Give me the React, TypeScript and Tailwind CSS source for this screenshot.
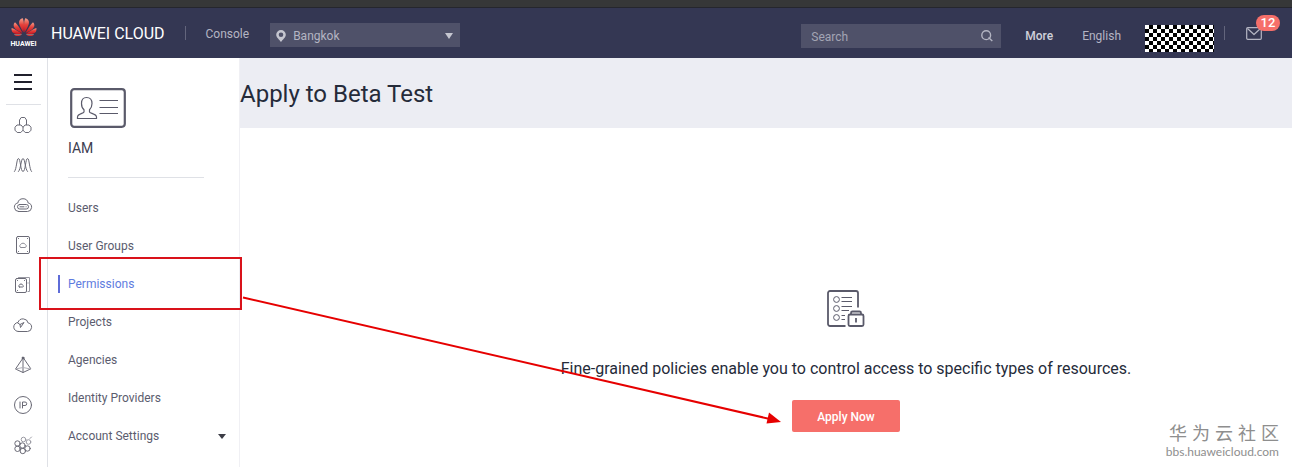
import type { ReactNode } from "react";

const menu = [
  "Users",
  "User Groups",
  "Permissions",
  "Projects",
  "Agencies",
  "Identity Providers",
];

function RailIcon({ children }: { children: ReactNode }) {
  return (
    <svg
      viewBox="0 0 20 20"
      className="w-5 h-5"
      fill="none"
      stroke="#6a6a76"
      strokeWidth="1"
      strokeLinecap="round"
      strokeLinejoin="round"
      aria-hidden="true"
    >
      {children}
    </svg>
  );
}

const services = [
  {
    label: "Elastic Cloud Server",
    icon: (
      <>
        <path d="M6.500 9.700V5L8.200 2.500H11.800L13.500 5V9.700" />
        <path d="M10 12.300L8 10H4L2 12.200V15.200L4.200 17.500H7.800L10 15.200L12.200 17.500H15.800L18 15.200V12.200L16 10H12L10 12.300V15.200" />
      </>
    ),
  },
  {
    label: "Auto Scaling",
    icon: (
      <>
        <path d="M1.500 16.500C3.800 14 3.500 3.500 5.500 3.500S7.500 16.500 10 16.500S12.500 3.500 14.500 3.500S16.200 14 18.500 16.500" />
        <path d="M5.500 16.500C8 14 8 3.500 10 3.500S12 14 14.500 16.500" />
      </>
    ),
  },
  {
    label: "Bare Metal Server",
    icon: (
      <>
        <path d="M5.500 16.500H14.500A4.300 4.300 0 0 0 15.200 8A5.300 5.300 0 0 0 4.800 8A4.300 4.300 0 0 0 5.500 16.500Z" />
        <rect x="4.500" y="9.500" width="11" height="4.500" rx="2.200" />
        <path d="M7 11.800H11M13 11.800H13.200" />
      </>
    ),
  },
  {
    label: "Elastic Volume Service",
    icon: (
      <>
        <rect x="3.500" y="1.500" width="13" height="17" rx="1.500" />
        <path d="M5.500 3.500H5.600M14.400 3.500H14.500M5.500 16.500H5.600M14.400 16.500H14.500" />
        <path d="M8 12.500H12A1.500 1.500 0 0 0 12.500 9.700A2.800 2.800 0 0 0 7.500 9.700A1.500 1.500 0 0 0 8 12.500Z" stroke="#8c8c96" />
      </>
    ),
  },
  {
    label: "Volume Backup Service",
    icon: (
      <>
        <rect x="2.500" y="3.500" width="11" height="14" rx="1.500" />
        <path d="M5.500 2.500H16.500V16.500H15" stroke="#9a9aa3" />
        <path d="M4.500 5.500H4.600M11.400 5.500H11.500M4.500 15.500H4.600M6.500 12H9.500C10.800 12 10.500 10.400 9.700 10.200A1.800 1.800 0 0 0 6.300 10.200C5.300 10.500 5.400 12 6.500 12ZM15 8H15.100" />
      </>
    ),
  },
  {
    label: "Object Storage Service",
    icon: (
      <>
        <path d="M5.500 16.500H14.500A4.300 4.300 0 0 0 15.200 8A5.300 5.300 0 0 0 5 7.500A4.500 4.500 0 0 0 5.500 16.500Z" />
        <path d="M4.800 8L7 9.500L11 7.500L7.500 12.500L7 9.500" />
      </>
    ),
  },
  {
    label: "Virtual Private Cloud",
    icon: (
      <>
        <path d="M10 3L2.500 14L10 17.500L17.500 14ZM10 3V17.500" />
        <path d="M2.500 14L10 12.500L17.500 14" stroke="#b0b0b8" />
        <circle cx="10" cy="3" r="1" fill="#3a3a45" />
      </>
    ),
  },
  {
    label: "Elastic IP",
    icon: (
      <>
        <circle cx="10" cy="10" r="8.500" />
        <path d="M7 7V13M9.500 13V7H12A1.700 1.700 0 0 1 12 10.500H9.500" />
      </>
    ),
  },
  {
    label: "Cloud Container Engine",
    icon: (
      <>
        <circle cx="4.500" cy="8.500" r="2.700" />
        <circle cx="9.500" cy="10.500" r="2.700" />
        <circle cx="14.500" cy="13.500" r="2.700" />
        <circle cx="4.500" cy="13.800" r="2.700" />
        <circle cx="9.800" cy="16" r="2.700" />
        <circle cx="10.500" cy="4.500" r="2.300" stroke="#9a9aa3" />
        <circle cx="15.500" cy="7" r="2.300" stroke="#9a9aa3" />
        <path d="M17 3.500L18.500 2" stroke="#9a9aa3" />
      </>
    ),
  },
];

function HuaweiLogo() {
  return (
    <svg viewBox="0 0 26 19" className="w-[26px] h-[19px]" aria-hidden="true">
      <defs>
        <linearGradient id="petal" x1="0" y1="0" x2="0" y2="1">
          <stop offset="0" stopColor="#f7a08c" />
          <stop offset="0.45" stopColor="#e5423c" />
          <stop offset="1" stopColor="#c81420" />
        </linearGradient>
      </defs>
      <g fill="url(#petal)">
        <path d="M12.500 14.500C9.500 9.500 7.500 6 8.200 3.300C8.800 1.200 10.500 .4 11.900 .3C13.400 4.500 13.200 10 12.500 14.500Z" />
        <path d="M13.500 14.500C16.500 9.500 18.500 6 17.800 3.300C17.200 1.200 15.500 .4 14.100 .3C12.600 4.500 12.800 10 13.500 14.500Z" />
        <path d="M11.500 15C9 10.500 6.500 6.500 4 4.300C2.300 5.800 2.200 8 3.600 10C5.200 12 8.400 13.800 11.500 15Z" />
        <path d="M14.500 15C17 10.500 19.500 6.500 22 4.300C23.700 5.800 23.800 8 22.400 10C20.800 12 17.600 13.800 14.500 15Z" />
        <path d="M11 15.800C7.500 13.500 4 11.200 .6 10C.1 12.600 1.300 14.700 3.500 15.500C5.800 16.200 8.500 16 11 15.800Z" />
        <path d="M15 15.800C18.500 13.500 22 11.200 25.400 10C25.900 12.600 24.700 14.700 22.500 15.500C20.200 16.200 17.500 16 15 15.800Z" />
        <path d="M11 16.500H3C4.800 18.400 8 18.700 11 16.500Z" />
        <path d="M15 16.500H23C21.200 18.400 18 18.700 15 16.500Z" />
      </g>
    </svg>
  );
}

function Header() {
  return (
    <header className="flex items-center h-[50px] bg-[#343753] text-xs text-[#b4b5c3]">
      <a href="#home" className="flex items-center text-white">
        <span className="flex flex-col items-center w-12 pr-px">
          <HuaweiLogo />
          <span className="mt-[3px] text-[7px] leading-[8px] font-bold">HUAWEI</span>
        </span>
        <span className="pl-[3px] pt-0.5 text-base">HUAWEI CLOUD</span>
      </a>
      <span className="ml-5 w-px h-3.5 bg-[#63657c]" />
      <a href="#console" className="ml-5 pt-0.5">Console</a>
      <label className="ml-[21px] mt-1 relative flex items-center w-[190px] h-6 bg-[#4f5169]">
        <svg viewBox="0 0 10 12" className="absolute left-1.5 top-[7px] w-2.5 h-3" fill="#c5c6d0" aria-hidden="true">
          <path fillRule="evenodd" d="M5 0A4.800 4.800 0 0 1 9.800 4.800C9.800 7.500 6.500 10 5 12C3.500 10 .2 7.500 .2 4.800A4.800 4.800 0 0 1 5 0ZM5 2.500A2.300 2.300 0 1 0 5 7.100A2.300 2.300 0 1 0 5 2.500Z" />
        </svg>
        <select aria-label="Region" className="w-full h-full pl-[23px] pt-0.5 appearance-none bg-transparent outline-none">
          <option>Bangkok</option>
        </select>
        <svg viewBox="0 0 8 6" className="absolute right-[7px] top-2.5 w-2 h-1.5" fill="#c5c6d0" aria-hidden="true">
          <path d="M0 0H8L4 6Z" />
        </svg>
      </label>

      <label className="ml-auto mt-1.5 flex items-center w-[200px] h-6 px-2 bg-[#4f5169]">
        <input
          type="search"
          aria-label="Search"
          placeholder="Search"
          className="flex-1 min-w-0 pl-0.5 pt-0.5 bg-transparent outline-none placeholder:text-[#a3a5b4]"
        />
        <svg viewBox="0 0 12 12" className="w-3 h-3" fill="none" stroke="#b4b5c3" strokeWidth="1.4" aria-hidden="true">
          <circle cx="5.200" cy="5.200" r="4.400" />
          <path d="M7.500 7.500L11.300 11" />
        </svg>
      </label>
      <button className="ml-6 mt-1.5 font-medium text-[#cfd0da]">More</button>
      <button className="ml-[29px] mt-1.5">English</button>
      <span className="ml-6 mt-[11px] w-[69px] h-[27px] bg-[repeating-conic-gradient(#000_0_25%,#fff_0_50%)] bg-[length:8px_8px]" />
      <span className="ml-2.5 w-px h-3.5 bg-[#63657c]" />
      <button aria-label="Messages" className="relative ml-[21px] mr-[30px]">
        <svg viewBox="0 0 16 13" className="w-4 h-[13px]" fill="none" stroke="#b4b5c3" strokeWidth="1.200" strokeLinejoin="round" aria-hidden="true">
          <rect x=".7" y=".7" width="14.600" height="11.600" rx="1" />
          <path d="M1.500 1.500L8 7.500L14.500 1.500" />
        </svg>
        <span className="absolute left-2.5 -top-3 w-6 h-4 rounded-full bg-[#f66f6a] text-white text-[13px] leading-4 font-medium text-center">
          12
        </span>
      </button>
    </header>
  );
}

function Rail() {
  return (
    <nav aria-label="Services" className="shrink-0 w-12 border-r border-[#dfe1e6] bg-white">
      <div className="mx-1.5 pr-px pt-0.5 flex items-center justify-center h-[47px] border-b border-[#dfe1e6]">
        <button aria-label="Service list" className="flex flex-col gap-[5px]">
          <span className="w-[18px] h-0.5 bg-[#20202c]" />
          <span className="w-[18px] h-0.5 bg-[#20202c]" />
          <span className="w-[18px] h-0.5 bg-[#20202c]" />
        </button>
      </div>
      {services.map((s) => (
        <a key={s.label} href="#service" aria-label={s.label} className="flex items-center justify-center h-10 pr-px">
          <RailIcon>{s.icon}</RailIcon>
        </a>
      ))}
    </nav>
  );
}

function Sidebar() {
  return (
    <aside className="shrink-0 w-48 border-r border-[#f0f0f4] bg-white text-[#5b5c6e]">
      <div className="ml-5 mr-[35px] pt-[30px] h-[120px] border-b border-[#dfe1e6]">
        <svg viewBox="0 0 56 40" className="ml-0.5 w-14 h-10" fill="none" stroke="#5a5a6a" aria-hidden="true">
          <rect x="1.200" y="1.200" width="53.600" height="37.600" rx="3" strokeWidth="2.200" />
          <path
            d="M16.500 9.500C12.800 9.500 11.500 12 11.500 15.500C11.500 18.500 12.500 20.500 14 21.800V24C14 25.500 7.500 25.500 7.500 29V30.500H26.500V29C26.500 25.500 19.500 25.500 19.500 24V21.800C21 20.500 22 18.500 22 15.500C22 12 20.500 9.500 16.500 9.500Z"
            strokeWidth="1.200"
          />
          <path d="M29.500 12.500H48M29.500 19.500H48M29.500 25.500H48" strokeWidth="1.200" />
        </svg>
        <h2 className="mt-2.5 text-sm leading-5 text-[#3c3d50]">IAM</h2>
      </div>
      <nav aria-label="IAM" className="pt-[11px] text-xs">
        {menu.map((item) => (
          <a
            key={item}
            href="#menu"
            className={
              item === "Permissions"
                ? "flex items-center h-[38px] pl-2.5 text-[#5e7ce0]"
                : "flex items-center h-[38px] pl-5"
            }
          >
            {item === "Permissions" && <span className="mr-2 w-0.5 h-[18px] bg-[#5e6cd8]" />}
            {item}
          </a>
        ))}
        <button className="flex items-center justify-between w-full h-[38px] pl-5 pr-[13px]">
          Account Settings
          <svg viewBox="0 0 8 5" className="w-2 h-[5px]" fill="#3c3d46" aria-hidden="true">
            <path d="M0 0H8L4 5Z" />
          </svg>
        </button>
      </nav>
    </aside>
  );
}

function PolicyIcon() {
  return (
    <svg viewBox="0 0 38 38" className="w-[38px] h-[38px]" fill="none" stroke="#5a5a6a" aria-hidden="true">
      <path d="M18.500 36H3A2 2 0 0 1 1 34V3A2 2 0 0 1 3 1H29A2 2 0 0 1 31 3V17.500" strokeWidth="1.800" />
      <g strokeWidth="1">
        <circle cx="9.500" cy="9.500" r="2.900" />
        <circle cx="9.500" cy="18.500" r="2.900" />
        <circle cx="9.500" cy="27.500" r="2.900" />
        <path d="M14.500 7.500H25M14.500 11.500H25M14.500 16.500H25M14.500 20.500H22M14.500 25.500H18M14.500 29.500H18" />
      </g>
      <rect x="21.500" y="24.500" width="15" height="11.500" rx="1.500" strokeWidth="1.800" />
      <path d="M24 24V23A1.500 1.500 0 0 1 25.500 21.500H32.500A1.500 1.500 0 0 1 34 23V24M29 28V32.500" strokeWidth="1.800" />
    </svg>
  );
}

export default function App() {
  return (
    <div className="relative flex flex-col min-h-screen overflow-hidden bg-white font-[Roboto,sans-serif]">
      <div className="h-2 bg-[#363738] border-b border-[#25262e]" />
      <Header />
      <div className="flex flex-1">
        <Rail />
        <Sidebar />
        <main className="flex-1">
          <h1 className="flex items-center h-[70px] pt-0.5 bg-[#ecedf3] text-2xl text-[#252b3a]">Apply to Beta Test</h1>
          <section className="flex flex-col items-center pl-[160px] pt-[162px]">
            <PolicyIcon />
            <p className="mt-[29px] text-base text-[#252b3a]">
              Fine-grained policies enable you to control access to specific types of resources.
            </p>
            <button className="mt-[19px] w-[108px] h-8 pt-0.5 rounded-xs bg-[#f66f6a] text-white text-xs font-medium">
              Apply Now
            </button>
          </section>
        </main>
      </div>

      <div className="absolute left-[39px] top-[257px] w-[203px] h-[53px] border-2 border-[#d9121a]" />
      <svg viewBox="0 0 540 130" className="absolute left-[242px] top-[296px] w-[540px] h-[130px]" aria-hidden="true">
        <path d="M1 1.500L528 123" stroke="#e60000" strokeWidth="2" />
        <path d="M539 126L524.500 127.500L527 116.500Z" fill="#e60000" />
      </svg>
      <div className="absolute right-[13px] bottom-2 text-[#8e8e8e] text-right">
        <p className="text-lg leading-[22px] font-['Liberation_Sans','Noto_Sans_CJK_SC',sans-serif]">华 为 云 社 区</p>
        <p className="text-xs leading-[14px] font-[Lato,sans-serif]">bbs.huaweicloud.com</p>
      </div>
    </div>
  );
}
